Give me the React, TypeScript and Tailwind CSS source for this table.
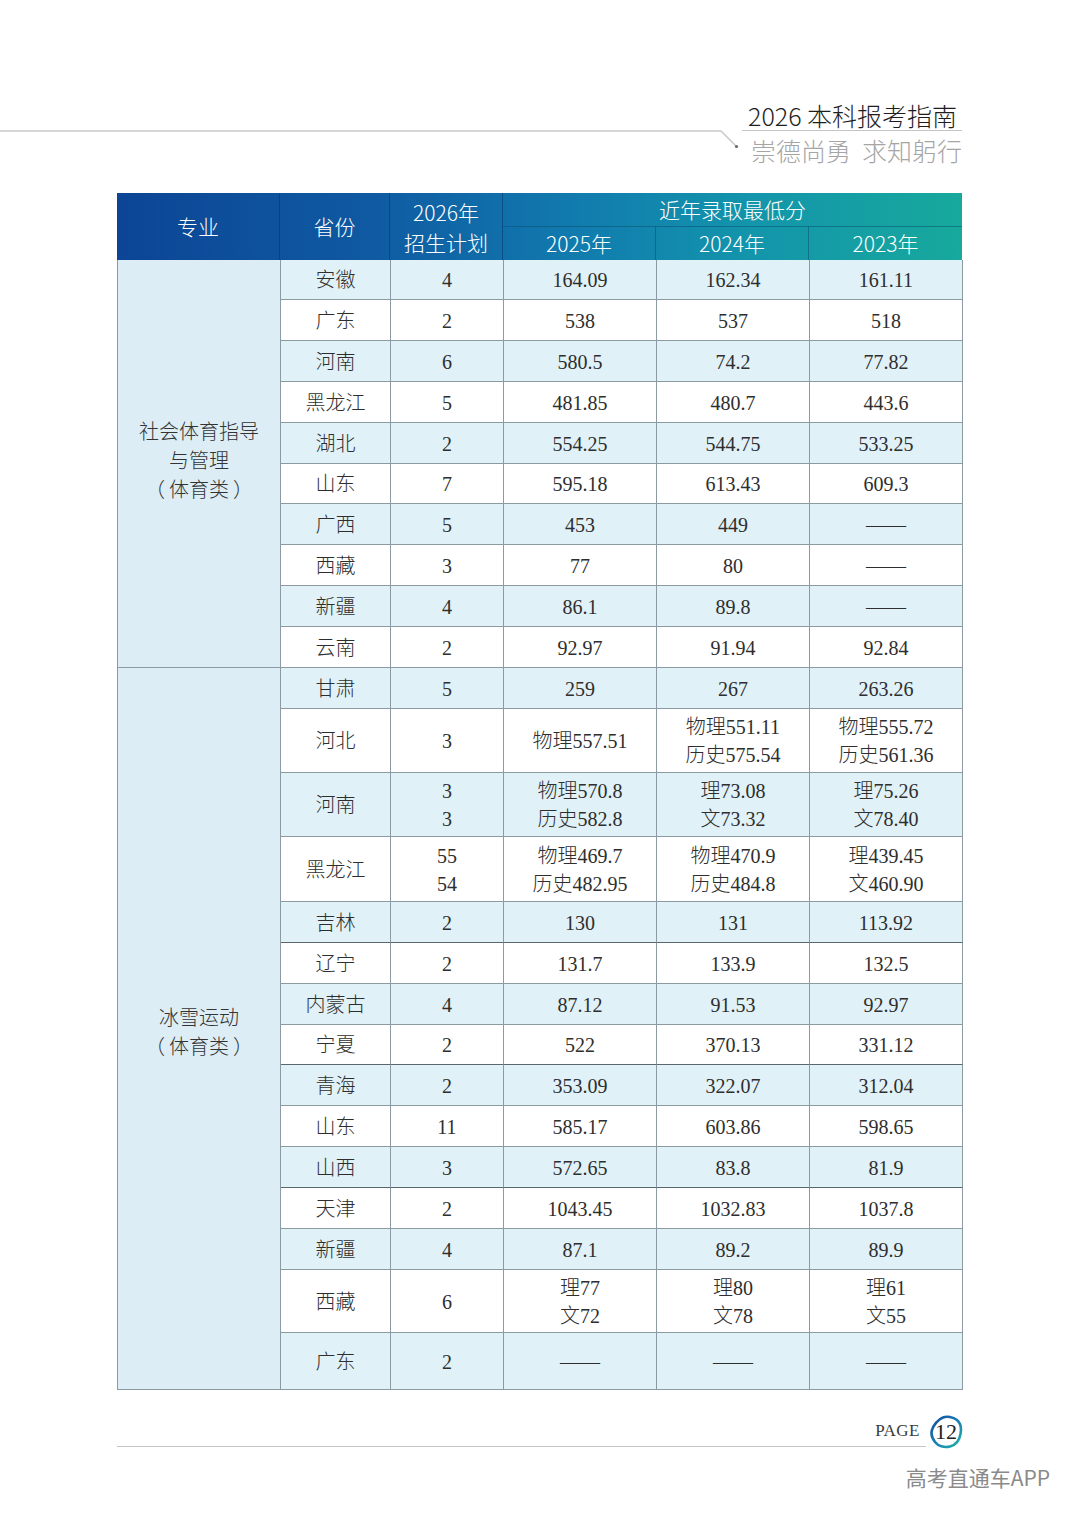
import React from "react";

type Row = {
  p: string;
  n: string[];
  a: string[];
  b: string[];
  c: string[];
  h: string;
  dark?: boolean;
};

const D = "——";

const g1: Row[] = [
  { p: "安徽", n: ["4"], a: ["164.09"], b: ["162.34"], c: ["161.11"], h: "h-[40px]" },
  { p: "广东", n: ["2"], a: ["538"], b: ["537"], c: ["518"], h: "h-[41px]" },
  { p: "河南", n: ["6"], a: ["580.5"], b: ["74.2"], c: ["77.82"], h: "h-[41px]" },
  { p: "黑龙江", n: ["5"], a: ["481.85"], b: ["480.7"], c: ["443.6"], h: "h-[41px]" },
  { p: "湖北", n: ["2"], a: ["554.25"], b: ["544.75"], c: ["533.25"], h: "h-[41px]" },
  { p: "山东", n: ["7"], a: ["595.18"], b: ["613.43"], c: ["609.3"], h: "h-[40px]" },
  { p: "广西", n: ["5"], a: ["453"], b: ["449"], c: [D], h: "h-[41px]" },
  { p: "西藏", n: ["3"], a: ["77"], b: ["80"], c: [D], h: "h-[41px]" },
  { p: "新疆", n: ["4"], a: ["86.1"], b: ["89.8"], c: [D], h: "h-[41px]" },
  { p: "云南", n: ["2"], a: ["92.97"], b: ["91.94"], c: ["92.84"], h: "h-[41px]" },
];

const g2: Row[] = [
  { p: "甘肃", n: ["5"], a: ["259"], b: ["267"], c: ["263.26"], h: "h-[41px]" },
  { p: "河北", n: ["3"], a: ["物理557.51"], b: ["物理551.11", "历史575.54"], c: ["物理555.72", "历史561.36"], h: "h-[64px]" },
  { p: "河南", n: ["3", "3"], a: ["物理570.8", "历史582.8"], b: ["理73.08", "文73.32"], c: ["理75.26", "文78.40"], h: "h-[64px]" },
  { p: "黑龙江", n: ["55", "54"], a: ["物理469.7", "历史482.95"], b: ["物理470.9", "历史484.8"], c: ["理439.45", "文460.90"], h: "h-[65px]" },
  { p: "吉林", n: ["2"], a: ["130"], b: ["131"], c: ["113.92"], h: "h-[41px]", dark: true },
  { p: "辽宁", n: ["2"], a: ["131.7"], b: ["133.9"], c: ["132.5"], h: "h-[41px]" },
  { p: "内蒙古", n: ["4"], a: ["87.12"], b: ["91.53"], c: ["92.97"], h: "h-[41px]" },
  { p: "宁夏", n: ["2"], a: ["522"], b: ["370.13"], c: ["331.12"], h: "h-[40px]", dark: true },
  { p: "青海", n: ["2"], a: ["353.09"], b: ["322.07"], c: ["312.04"], h: "h-[41px]" },
  { p: "山东", n: ["11"], a: ["585.17"], b: ["603.86"], c: ["598.65"], h: "h-[41px]" },
  { p: "山西", n: ["3"], a: ["572.65"], b: ["83.8"], c: ["81.9"], h: "h-[41px]", dark: true },
  { p: "天津", n: ["2"], a: ["1043.45"], b: ["1032.83"], c: ["1037.8"], h: "h-[41px]" },
  { p: "新疆", n: ["4"], a: ["87.1"], b: ["89.2"], c: ["89.9"], h: "h-[41px]" },
  { p: "西藏", n: ["6"], a: ["理77", "文72"], b: ["理80", "文78"], c: ["理61", "文55"], h: "h-[63px]" },
  { p: "广东", n: ["2"], a: [D], b: [D], c: [D], h: "h-[57px]" },
];

const serif = { fontFamily: '"Liberation Serif", "Noto Sans CJK SC", serif' };
const sans = { fontFamily: '"Noto Sans CJK SC", "Noto Sans", sans-serif' };

function Cell({ lines, row, blue }: { lines: string[]; row: Row; blue: boolean }) {
  return (
    <div
      className={`${row.h} flex flex-col items-center justify-center border-r border-b ${
        row.dark ? "border-b-[#5c666d]" : "border-b-[#8c9aa3]"
      } border-r-[#8c9aa3] ${blue ? "bg-[#e1f1f8]" : "bg-white"} text-[20px] leading-[28px] text-[#2e2e2e] pt-[1px]`}
    >
      {lines.map((l, i) => (
        <div key={i}>{l}</div>
      ))}
    </div>
  );
}

function Rows({ rows, offset }: { rows: Row[]; offset: number }) {
  return (
    <>
      {rows.map((r, i) => {
        const blue = (i + offset) % 2 === 0;
        return (
          <React.Fragment key={i}>
            <Cell lines={[r.p]} row={r} blue={blue} />
            <Cell lines={r.n} row={r} blue={blue} />
            <Cell lines={r.a} row={r} blue={blue} />
            <Cell lines={r.b} row={r} blue={blue} />
            <Cell lines={r.c} row={r} blue={blue} />
          </React.Fragment>
        );
      })}
    </>
  );
}

function Paren() {
  return (
    <div className="flex items-center">
      <span>（</span>
      <span className="mx-[4px]">体育类</span>
      <span>）</span>
    </div>
  );
}

export default function App() {
  return (
    <div className="w-[1080px] h-[1517px] bg-white overflow-hidden" style={sans}>
      {/* top header */}
      <div className="flex pt-[99px]">
        <svg width="742" height="24" className="mt-[31px] shrink-0" viewBox="0 0 742 24">
          <path d="M0 1 H721 L736 16" stroke="#c9c9c9" strokeWidth="1.5" fill="none" />
          <circle cx="736.5" cy="16.5" r="1.6" fill="#6a6a6a" />
        </svg>
        <div className="w-[220px]">
          <div className="h-[32px] border-b border-[#c4c4c4] pl-[6px] text-[25px] leading-[32px] font-light text-[#1e1e1e] whitespace-nowrap">
            2026 本科报考指南
          </div>
          <div className="mt-[4px] pl-[9px] text-[25px] leading-[30px] font-light text-[#a5a5a5] whitespace-nowrap">
            崇德尚勇&nbsp;&nbsp;求知躬行
          </div>
        </div>
      </div>

      {/* table */}
      <div className="ml-[117px] mt-[28px] w-[845px]">
        {/* head */}
        <div
          className="flex h-[67px] text-white text-[21px] font-light"
          style={{ background: "linear-gradient(90deg, #0c4595 0%, #0f5aa2 30%, #117cae 55%, #1395ab 75%, #17a99c 100%)" }}
        >
          <div className="w-[163px] flex items-center justify-center border-r border-[#0a3670]/60">专业</div>
          <div className="w-[110px] flex items-center justify-center border-r border-[#0a3670]/60">省份</div>
          <div className="w-[113px] flex flex-col items-center justify-center border-r border-[#0a3670]/60 leading-[30px]">
            <div>2026年</div>
            <div>招生计划</div>
          </div>
          <div className="flex-1 flex flex-col">
            <div className="h-[34px] flex items-center justify-center border-b border-[#0b4a6e]/50 text-[21px]">
              近年录取最低分
            </div>
            <div className="flex flex-1">
              <div className="w-[153px] flex items-center justify-center border-r border-[#0b4a6e]/50">2025年</div>
              <div className="w-[153px] flex items-center justify-center border-r border-[#0b4a6e]/50">2024年</div>
              <div className="flex-1 flex items-center justify-center">2023年</div>
            </div>
          </div>
        </div>
        {/* body */}
        <div
          className="grid grid-cols-[163px_110px_113px_153px_153px_153px] border-l border-[#8c9aa3] font-light"
          style={serif}
        >
          <div className="row-span-10 flex flex-col items-center justify-center bg-[#dcedf6] border-r border-b border-[#8c9aa3] text-[20px] leading-[29px] text-[#333] pb-[4px]">
            <div>社会体育指导</div>
            <div>与管理</div>
            <Paren />
          </div>
          <Rows rows={g1} offset={0} />
          <div className="row-span-15 flex flex-col items-center justify-center bg-[#dcedf6] border-r border-b border-[#8c9aa3] text-[20px] leading-[29px] text-[#333] pt-[8px]">
            <div>冰雪运动</div>
            <Paren />
          </div>
          <Rows rows={g2} offset={10} />
        </div>
      </div>

      {/* footer */}
      <div className="ml-[117px] mt-[25px] w-[846px] flex items-start">
        <div className="flex-1 h-[32px] border-b border-[#c4c4c4] flex items-center justify-end pr-[6px]">
          <span className="text-[17px] tracking-[0.5px] text-[#3a3a3a]" style={serif}>
            PAGE
          </span>
        </div>
        <div className="relative w-[34px] h-[34px] ml-[3px] flex items-center justify-center">
          <svg className="absolute inset-0" width="34" height="34" viewBox="0 0 34 34">
            <defs>
              <linearGradient id="bg1" x1="0" y1="0" x2="1" y2="1">
                <stop offset="0" stopColor="#0f4a9c" />
                <stop offset="0.5" stopColor="#1a7fb5" />
                <stop offset="1" stopColor="#20b3a5" />
              </linearGradient>
            </defs>
            <path
              d="M14 2.5 C18 1 24 2 28 5 C32 8.5 32.5 14 31.5 19 C30.5 25 27 30 21 31.5 C15 33 9 31 6 27 C3 23 1.5 19.5 3 15 C4.5 10 9 4.5 14 2.5 Z"
              fill="none"
              stroke="url(#bg1)"
              strokeWidth="2.6"
            />
          </svg>
          <span className="relative text-[22px] leading-none text-[#222]" style={serif}>
            12
          </span>
        </div>
      </div>

      <div className="mt-[16px] pr-[30px] text-right text-[21px] leading-[24px] text-[#8a8a8a]">高考直通车APP</div>
    </div>
  );
}
